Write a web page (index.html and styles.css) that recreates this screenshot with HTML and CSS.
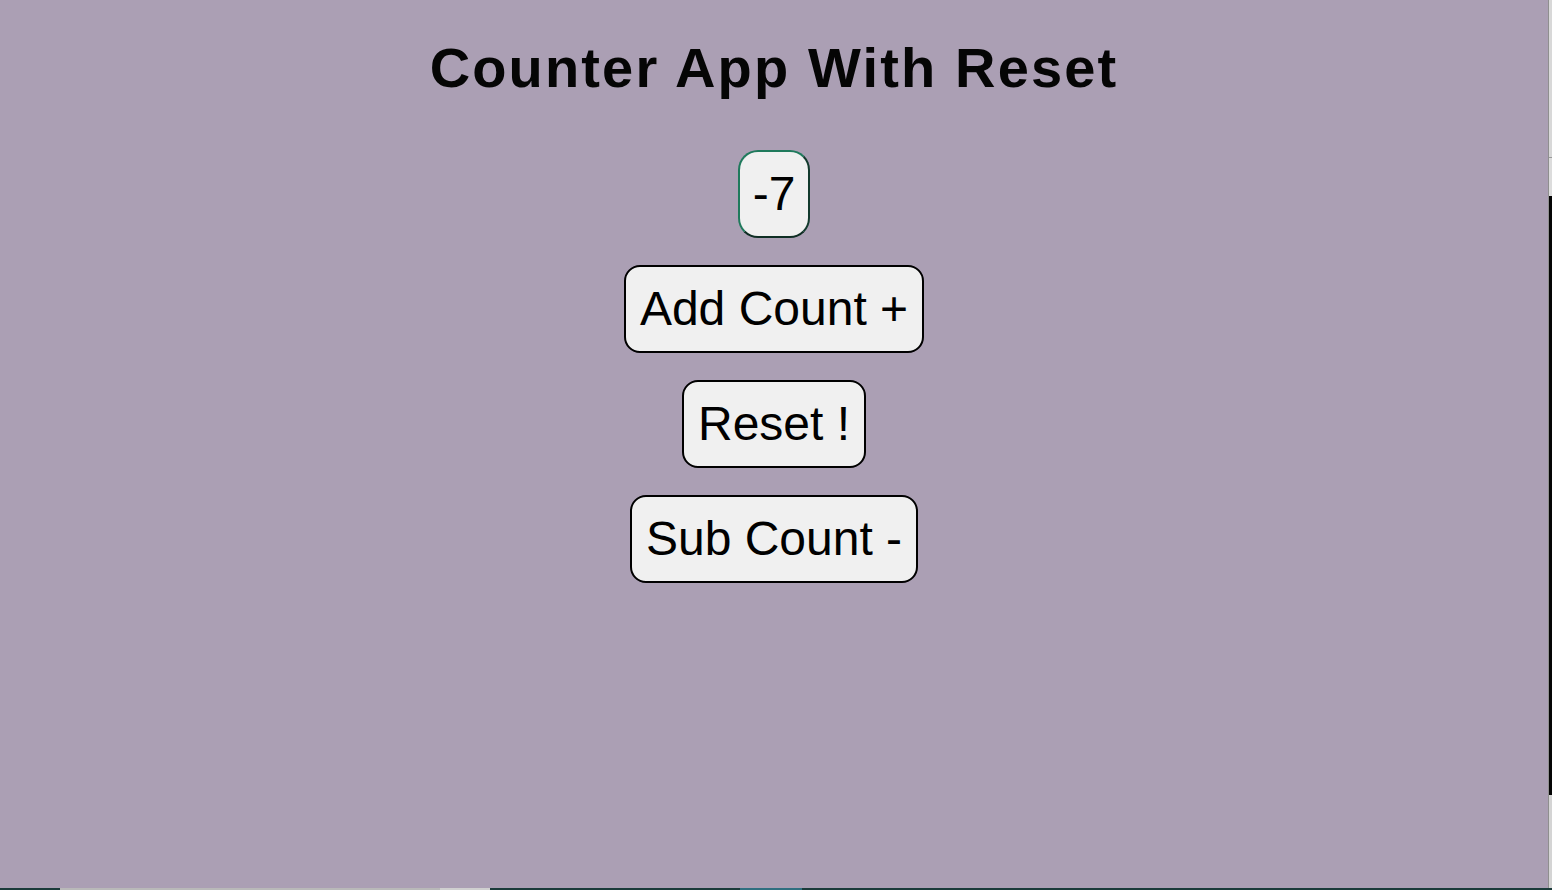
FILE: index.html
```html
<!DOCTYPE html>
<html lang="en">
<head>
<meta charset="utf-8">
<title>Counter App With Reset</title>
<link rel="stylesheet" href="styles.css">
</head>
<body>
<div class="screen">
  <div class="row">
    <main class="app">
      <h1 class="title">Counter App With Reset</h1>
      <div class="counter">-7</div>
      <button class="btn" type="button">Add Count +</button>
      <button class="btn" type="button">Reset !</button>
      <button class="btn" type="button">Sub Count -</button>
    </main>
    <div class="edge-right"></div>
  </div>
  <div class="edge-bottom"></div>
</div>
</body>
</html>
```

FILE: styles.css
```css
html, body {
  margin: 0;
  padding: 0;
}

body {
  width: 1552px;
  height: 890px;
  overflow: hidden;
  background: #ab9fb4;
  font-family: "Liberation Sans", Arial, sans-serif;
}

.screen {
  display: flex;
  flex-direction: column;
  width: 1552px;
  height: 890px;
}

.row {
  display: flex;
  height: 888px;
}

.app {
  width: 1548px;
  height: 888px;
  background: #ab9fb4;
  display: flex;
  flex-direction: column;
  align-items: center;
  gap: 27px;
  padding-top: 36px;
  box-sizing: border-box;
}

.title {
  margin: 0 0 23px 0;
  font-size: 56px;
  font-weight: bold;
  letter-spacing: 2.15px;
  line-height: 64px;
  color: #050505;
}

.counter {
  font-size: 48px;
  line-height: 56px;
  padding: 14px 13px;
  background: #f0f0f0;
  border: 2px solid;
  border-color: #1f7a5c #123a2d #0f2e24 #1f7a5c;
  border-radius: 20px;
  color: #000;
}

.btn {
  font-family: "Liberation Sans", Arial, sans-serif;
  font-size: 48px;
  line-height: 56px;
  padding: 14px 14px;
  background: #f0f0f0;
  border: 2px solid #000;
  border-radius: 16px;
  color: #000;
  margin: 0;
}

.edge-right {
  width: 4px;
  height: 888px;
  background: linear-gradient(to bottom,
    #d8d8d8 0, #d8d8d8 157px,
    #9a9a9a 157px, #9a9a9a 158px,
    #dcdcdc 158px, #dcdcdc 196px,
    #050505 196px, #050505 795px,
    #d4d4d4 795px, #d4d4d4 888px);
  border-left: 1px solid #8f8f8f;
  box-sizing: border-box;
}

.edge-bottom {
  height: 2px;
  width: 1552px;
  background: linear-gradient(to right,
    #1b3b3a 0, #1b3b3a 60px,
    #b9b9b9 60px, #b9b9b9 440px,
    #d0d0d0 440px, #d0d0d0 490px,
    #1b3b3a 490px, #1b3b3a 740px,
    #2f6f80 740px, #2f6f80 802px,
    #1b3b3a 802px, #1b3b3a 1552px);
}
```
